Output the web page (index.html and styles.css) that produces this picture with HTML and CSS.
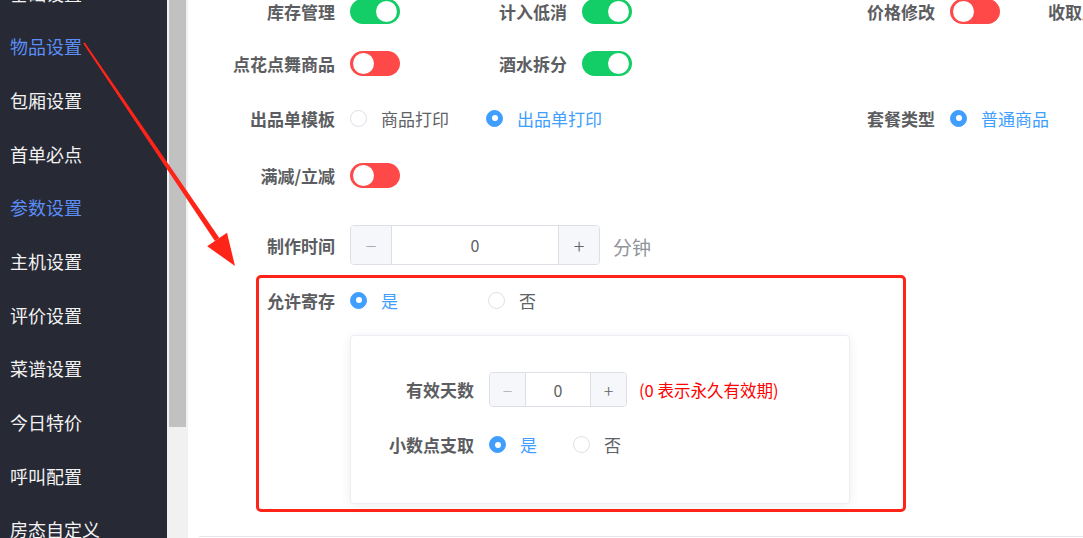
FILE: index.html
```html
<!DOCTYPE html>
<html lang="zh-CN">
<head>
<meta charset="utf-8">
<title>参数设置</title>
<link rel="stylesheet" href="styles.css">
</head>
<body>
<div class="app">
  <aside class="sidebar">
    <ul class="nav">
      <li class="nav-item">基础设置</li>
      <li class="nav-item active">物品设置</li>
      <li class="nav-item">包厢设置</li>
      <li class="nav-item">首单必点</li>
      <li class="nav-item active">参数设置</li>
      <li class="nav-item">主机设置</li>
      <li class="nav-item">评价设置</li>
      <li class="nav-item">菜谱设置</li>
      <li class="nav-item">今日特价</li>
      <li class="nav-item">呼叫配置</li>
      <li class="nav-item">房态自定义</li>
    </ul>
  </aside>
  <div class="scrollbar"><div class="thumb"></div></div>
  <main class="main">
    <div class="row r1">
      <div class="item col-a"><span class="label">库存管理</span><span class="switch on"></span></div>
      <div class="item col-b"><span class="label">计入低消</span><span class="switch on"></span></div>
      <div class="item col-c"><span class="label">价格修改</span><span class="switch off"></span></div>
      <div class="item col-d"><span class="label label-left">收取服务费</span></div>
    </div>
    <div class="row r2">
      <div class="item col-a"><span class="label">点花点舞商品</span><span class="switch off"></span></div>
      <div class="item col-b"><span class="label">酒水拆分</span><span class="switch on"></span></div>
    </div>
    <div class="row r3">
      <div class="item col-ab">
        <span class="label">出品单模板</span>
        <span class="radio"><span class="dot"></span><span class="rtext">商品打印</span></span>
        <span class="radio checked"><span class="dot"></span><span class="rtext">出品单打印</span></span>
      </div>
      <div class="item col-c">
        <span class="label">套餐类型</span>
        <span class="radio checked"><span class="dot"></span><span class="rtext">普通商品</span></span>
      </div>
    </div>
    <div class="row r4">
      <div class="item col-a"><span class="label">满减/立减</span><span class="switch off"></span></div>
    </div>
    <div class="row r5">
      <div class="item">
        <span class="label">制作时间</span>
        <div class="num num-lg">
          <span class="num-btn minus">−</span>
          <span class="num-val">0</span>
          <span class="num-btn plus">+</span>
        </div>
        <span class="unit">分钟</span>
      </div>
    </div>
    <div class="row r6">
      <div class="item">
        <span class="label">允许寄存</span>
        <span class="radio checked wide"><span class="dot"></span><span class="rtext">是</span></span>
        <span class="radio"><span class="dot"></span><span class="rtext">否</span></span>
      </div>
    </div>
    <div class="subbox">
      <div class="sub-row s1">
        <span class="sub-label">有效天数</span>
        <div class="num num-sm">
          <span class="num-btn minus">−</span>
          <span class="num-val">0</span>
          <span class="num-btn plus">+</span>
        </div>
        <span class="hint">(0 表示永久有效期)</span>
      </div>
      <div class="sub-row s2">
        <span class="sub-label">小数点支取</span>
        <span class="radio checked"><span class="dot"></span><span class="rtext">是</span></span>
        <span class="radio"><span class="dot"></span><span class="rtext">否</span></span>
      </div>
    </div>
    <div class="divider"></div>
  </main>

  <div class="highlight"></div>
  <svg class="arrow" width="1083" height="538" viewBox="0 0 1083 538">
    <polygon points="83.2,43.6 84.8,42.4 219.3,237.9 214.9,240.9" fill="#ff2418"/>
    <polygon points="235,266 207.2,246.2 227.0,232.8" fill="#ff2418"/>
  </svg>
</div>
</body>
</html>
```

FILE: styles.css
```css
* { box-sizing: border-box; }

html, body {
  margin: 0;
  padding: 0;
  width: 1083px;
  height: 538px;
  overflow: hidden;
  background: #ffffff;
  font-family: "Noto Sans CJK SC", "Noto Sans", sans-serif;
}

.app {
  position: relative;
  display: flex;
  width: 1083px;
  height: 538px;
  overflow: hidden;
}

/* sidebar */
.sidebar {
  width: 167px;
  flex: none;
  background: #272934;
  overflow: hidden;
}
.nav {
  list-style: none;
  margin: -33.5px 0 0 0;
  padding: 0;
}
.nav-item {
  height: 53.7px;
  line-height: 53.7px;
  padding-left: 10px;
  font-size: 18px;
  color: #f2f2f2;
  white-space: nowrap;
}
.nav-item.active { color: #5b8ef6; }

.scrollbar {
  width: 21px;
  flex: none;
  background: #f1f1f1;
  padding: 0 2px;
}
.thumb {
  height: 427px;
  background: #c1c1c1;
}

/* main */
.main {
  flex: 1;
  min-width: 0;
  background: #ffffff;
}

.row {
  display: flex;
  align-items: center;
  height: 40px;
}
.r1 { margin-top: -9px; }
.r2 { margin-top: 12px; }
.r3 { margin-top: 15px; }
.r4 { margin-top: 17px; }
.r5 { margin-top: 30px; }
.r6 { margin-top: 15px; }

.item {
  display: flex;
  align-items: center;
  flex: none;
  white-space: nowrap;
}
.col-a { width: 232px; }
.col-b { width: 368px; }
.col-ab { width: 600px; }
.col-c { width: 232px; }
.col-d { width: 200px; }

.label {
  width: 162px;
  flex: none;
  padding-right: 15px;
  text-align: right;
  font-size: 17px;
  font-weight: 700;
  color: #5c5d61;
}
.label-left {
  text-align: left;
  padding-left: 28px;
}

/* switch */
.switch {
  position: relative;
  width: 50px;
  height: 25px;
  border-radius: 13px;
  flex: none;
}
.switch::after {
  content: "";
  position: absolute;
  top: 2px;
  width: 21px;
  height: 21px;
  border-radius: 50%;
  background: #ffffff;
}
.switch.on { background: #13ce66; }
.switch.on::after { right: 3px; }
.switch.off { background: #ff4949; }
.switch.off::after { left: 3px; }

/* radio */
.radio {
  display: inline-flex;
  align-items: center;
  margin-right: 37px;
  font-size: 17px;
  color: #606266;
}
.radio .dot {
  position: relative;
  width: 17px;
  height: 17px;
  border-radius: 50%;
  border: 1px solid #dcdfe6;
  background: #ffffff;
  flex: none;
}
.radio.checked .dot {
  background: #409eff;
  border-color: #409eff;
}
.radio.checked .dot::after {
  content: "";
  position: absolute;
  left: 50%;
  top: 50%;
  width: 6px;
  height: 6px;
  margin: -3px 0 0 -3px;
  border-radius: 50%;
  background: #ffffff;
}
.radio .rtext { margin-left: 14px; }
.radio.checked .rtext { color: #409eff; }
.radio.wide { width: 138px; margin-right: 0; }

/* number input */
.num {
  display: flex;
  border: 1px solid #dcdfe6;
  border-radius: 4px;
  overflow: hidden;
  background: #ffffff;
  flex: none;
}
.num-lg { width: 250px; height: 40px; }
.num-sm { width: 138px; height: 35px; }
.num-btn {
  display: flex;
  align-items: center;
  justify-content: center;
  background: #f5f7fa;
  color: #606266;
  font-size: 20px;
  font-weight: 300;
  flex: none;
}
.num-lg .num-btn { width: 41px; }
.num-sm .num-btn { width: 36px; font-size: 18px; }
.num-btn.minus { border-right: 1px solid #dcdfe6; color: #a8abb2; }
.num-btn.plus { border-left: 1px solid #dcdfe6; }
.num-val {
  flex: 1;
  display: flex;
  align-items: center;
  justify-content: center;
  font-size: 16px;
  color: #606266;
}
.unit {
  margin-left: 13px;
  margin-top: 3px;
  font-size: 19px;
  color: #909399;
}

/* nested box */
.subbox {
  margin: 15px 0 0 162px;
  width: 500px;
  height: 169px;
  border: 1px solid #ebeef5;
  border-radius: 4px;
  background: #ffffff;
  box-shadow: 0 2px 12px rgba(0, 0, 0, 0.07);
  padding-top: 36px;
}
.sub-row {
  display: flex;
  align-items: center;
  height: 35px;
  white-space: nowrap;
}
.s2 { margin-top: 20px; }
.sub-label {
  width: 138px;
  flex: none;
  padding-right: 15px;
  text-align: right;
  font-size: 17px;
  font-weight: 700;
  color: #5c5d61;
}
.s2 .radio { margin-right: 36px; }
.hint {
  margin-left: 12px;
  font-size: 16.5px;
  color: #ff0000;
}

.divider {
  margin: 32px 0 0 11px;
  border-top: 1px solid #e4e7ed;
}

/* annotations */
.highlight {
  position: absolute;
  left: 256px;
  top: 275px;
  width: 650px;
  height: 237px;
  border: 3px solid #ff2418;
  border-radius: 5px;
  pointer-events: none;
}
.arrow {
  position: absolute;
  left: 0;
  top: 0;
  pointer-events: none;
}
```
